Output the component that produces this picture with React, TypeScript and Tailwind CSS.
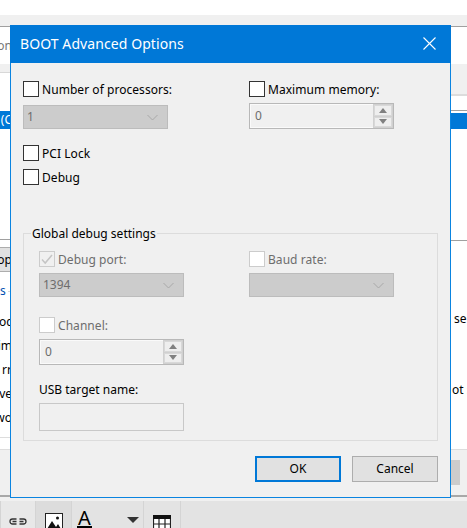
import React from 'react';

const uiFont = "font-['Noto_Sans','Open_Sans',sans-serif]";

function Checkbox({ disabled, checked }: { disabled?: boolean; checked?: boolean }) {
  return (
    <span
      className={`flex h-4 w-4 shrink-0 items-center justify-center border ${
        disabled ? (checked ? 'border-[#cccccc] bg-[#f0f0f0]' : 'border-[#cccccc] bg-white') : 'border-[#333333] bg-white'
      }`}
    >
      {checked && (
        <svg width="12" height="12" viewBox="0 0 12 12" fill="none" stroke="#c4c4c4" strokeWidth="1.5">
          <path d="M1 6.5 L4.2 10 L11 2" />
        </svg>
      )}
    </span>
  );
}

function CheckRow({ label, disabled, checked }: { label: string; disabled?: boolean; checked?: boolean }) {
  return (
    <div className="flex h-4 items-center gap-[3px]">
      <Checkbox disabled={disabled} checked={checked} />
      <span className={`pt-[2px] text-[12px] leading-[16px] tracking-[0.05px] ${disabled ? 'text-[#6d6d6d]' : 'text-black'}`}>{label}</span>
    </div>
  );
}

function Combo({ value }: { value: string }) {
  return (
    <div className="flex h-6 w-[145px] items-center justify-between border border-[#bcbcbc] bg-[#cccccc] pl-[3px] pr-[9px]">
      <span className="text-[12px] text-[#6d6d6d]">{value}</span>
      <svg width="11" height="7" viewBox="0 0 11 7" fill="none" stroke="#a8a8a8">
        <path d="M0.5 1 L5.5 6 L10.5 1" />
      </svg>
    </div>
  );
}

function Spinner({ value }: { value: string }) {
  return (
    <div className="flex h-[26px] w-[145px] border border-[#b8b8b8] bg-[#f0f0f0]">
      <div className="flex flex-1 items-center border border-[#fafafa] border-r-0 pl-[4px] text-[12px] text-[#6d6d6d]">{value}</div>
      <div className="flex w-[20px] flex-col gap-px bg-[#d0d0d0] p-px">
        <div className="flex flex-1 items-center justify-center border border-[#d8d8d8] bg-[#eeeeee]">
          <svg width="8" height="5" viewBox="0 0 8 5" fill="#808080"><path d="M0 5 L4 0 L8 5 Z" /></svg>
        </div>
        <div className="flex flex-1 items-center justify-center border border-[#d8d8d8] bg-[#eeeeee]">
          <svg width="8" height="5" viewBox="0 0 8 5" fill="#808080"><path d="M0 0 L8 0 L4 5 Z" /></svg>
        </div>
      </div>
    </div>
  );
}

function Dialog() {
  return (
    <div className={`absolute left-[10px] top-[25px] flex h-[473px] w-[441px] flex-col border border-[#0a84e0] bg-[#f0f0f0] ${uiFont}`}>
      <div className="-mx-px -mt-px flex h-[38px] shrink-0 items-center justify-between bg-[#0078d7] pb-[1px] pl-[10px] pr-[15px]">
        <span className="text-[14px] tracking-[0.08px] text-white">BOOT Advanced Options</span>
        <svg width="13" height="13" viewBox="0 0 13 13" stroke="#ffffff" strokeWidth="1.1">
          <path d="M0.5 0.5 L12.5 12.5 M12.5 0.5 L0.5 12.5" />
        </svg>
      </div>

      <div className="flex flex-1 flex-col pl-[12px] pr-[12px] pt-[18px]">
        <div className="grid grid-cols-[226px_1fr]">
          <div className="flex flex-col">
            <CheckRow label="Number of processors:" />
            <div className="mt-2"><Combo value="1" /></div>
            <div className="mt-4"><CheckRow label="PCI Lock" /></div>
            <div className="mt-2"><CheckRow label="Debug" /></div>
          </div>
          <div className="flex flex-col">
            <CheckRow label="Maximum memory:" />
            <div className="mt-[6px]"><Spinner value="0" /></div>
          </div>
        </div>

        <div className="relative mt-[48px] h-[208px] border border-[#dcdcdc] pl-[15px] pt-[17px]">
          <span className="absolute -top-[8px] left-[7px] bg-[#f0f0f0] px-px text-[12px] leading-[16px] text-black">
            Global debug settings
          </span>
          <div className="grid grid-cols-[210px_1fr]">
            <div className="flex flex-col">
              <CheckRow label="Debug port:" disabled checked />
              <div className="mt-[6px]"><Combo value="1394" /></div>
              <div className="mt-5"><CheckRow label="Channel:" disabled /></div>
              <div className="mt-[6px]"><Spinner value="0" /></div>
              <span className="mt-[17px] text-[12px] leading-[16px] text-black">USB target name:</span>
              <div className="mt-[5px] h-[28px] w-[145px] border border-[#c8c8c8] bg-[#f0f0f0]" />
            </div>
            <div className="flex flex-col">
              <CheckRow label="Baud rate:" disabled />
              <div className="mt-[6px]"><Combo value="" /></div>
            </div>
          </div>
        </div>

        <div className="mt-[15px] flex justify-end gap-[11px]">
          <button className="h-[26px] w-[86px] border-2 border-[#0078d7] bg-[#e1e1e1] text-[12px] text-black">OK</button>
          <button className="h-[26px] w-[86px] border border-[#adadad] bg-[#e1e1e1] text-[12px] text-black">Cancel</button>
        </div>
      </div>
    </div>
  );
}

function ClipText({ text, className }: { text: string; className?: string }) {
  return (
    <div className={`flex h-6 items-center justify-end overflow-hidden whitespace-nowrap text-[12px] text-black ${className ?? ''}`}>
      {text}
    </div>
  );
}

function LeftStrip() {
  return (
    <div className="flex w-[12px] flex-col overflow-hidden">
      <div className="flex h-[37px] items-center justify-end overflow-hidden bg-white text-[12px] text-[#777777]">on</div>
      <div className="h-[9px] border-b border-[#d8d8d8] bg-[#f0f0f0]" />
      <div className="h-[38px] bg-white" />
      <div className="flex h-[18px] items-center justify-end overflow-hidden bg-[#0078d7] text-[12px] text-white">(C</div>
      <div className="h-[111px] border-b border-[#a0a0a0] bg-white" />
      <div className="h-[7px] bg-white" />
      <div className="flex h-[25px] items-center justify-end overflow-hidden border-y border-[#adadad] bg-[#e1e1e1] text-[12px] text-black">op</div>
      <div className="flex flex-1 flex-col bg-white">
        <div className="mt-[9px] flex h-[20px] items-center justify-between text-[12px] text-[#0050b0]">
          <span>s</span>
          <span className="h-px w-[4px] bg-[#d8d8d8]" />
        </div>
        <div className="mt-[9px]">
          <ClipText text="oc" />
          <ClipText text="im" />
          <ClipText text="rr" />
          <ClipText text="ve" />
          <ClipText text="wo" />
        </div>
      </div>
      <div className="h-[12px] border-t border-[#dddddd] bg-white" />
      <div className="h-[46px] border-t border-[#dddddd] bg-[#f0f0f0]" />
    </div>
  );
}

function RightStrip() {
  return (
    <div className="flex w-[16px] flex-col overflow-hidden">
      <div className="h-[37px] bg-white" />
      <div className="h-[32px] border-b-2 border-[#dcdcdc] bg-[#f0f0f0]" />
      <div className="h-[15px] border-b border-[#a0a0a0] bg-white" />
      <div className="h-[2px] bg-white" />
      <div className="h-4 bg-[#0078d7]" />
      <div className="h-[112px] border-b border-[#a0a0a0] bg-white" />
      <div className="flex flex-1 flex-col bg-white">
        <div className="mt-[66px] h-6 overflow-hidden whitespace-nowrap pl-[3px] text-[12px] leading-6 text-black">se</div>
        <div className="mt-[47px] h-6 overflow-hidden whitespace-nowrap pl-px text-[12px] leading-6 text-black">ot s</div>
      </div>
      <div className="flex h-[46px] items-center border-t border-[#dddddd] bg-[#f0f0f0]">
        <div className="h-[25px] w-[9px] bg-[#cccccc]" />
      </div>
    </div>
  );
}

function Toolbar() {
  return (
    <div className="flex h-[33px] border-t-2 border-[#a8a8a8] bg-[#f0f0f0] pt-[4px]">
      <div className="flex flex-1 items-start bg-[#e3e3e3]">
        <div className="flex h-full w-[36px] items-start justify-center border-x border-[#d4d4d4] bg-[#e8e8e8] pt-[17px]">
          <svg width="18" height="7" viewBox="0 0 18 7" fill="none" stroke="#333333" strokeWidth="1.3">
            <path d="M7.5 1 H3.5 a2.5 2.5 0 0 0 0 5 H7.5 M3.5 3.5 H7.5 M10.5 1 H14.5 a2.5 2.5 0 0 1 0 5 H10.5 M10.5 3.5 H14.5" />
          </svg>
        </div>
        <div className="flex h-full w-[36px] items-start justify-center border-r border-[#d4d4d4] bg-[#dcdcdc] pt-[12px]">
          <svg width="18" height="18" viewBox="0 0 18 18" fill="none">
            <rect x="0.5" y="0.5" width="17" height="17" fill="#ffffff" stroke="#222222" />
            <circle cx="12.5" cy="5" r="1.5" fill="#111111" />
            <path d="M2 16 L7 8 L11 14 L13 11 L16 16 Z" fill="#111111" />
          </svg>
        </div>
        <div className={`relative flex h-full w-[72px] items-start justify-between border-r border-[#d4d4d4] pl-[5px] pr-[4px] ${uiFont}`}>
          <div className="flex flex-col items-center">
            <span className="mt-[9px] text-[20px] leading-[16px] text-black">A</span>
            <span className="h-[2px] w-[15px] bg-black" />
          </div>
          <svg className="mt-[16px]" width="12" height="6" viewBox="0 0 12 6" fill="#333333"><path d="M0 0 H12 L6 6 Z" /></svg>
        </div>
        <div className="flex h-full w-[37px] items-start justify-center border-r border-[#d4d4d4] pt-[14px]">
          <svg width="18" height="18" viewBox="0 0 18 18" fill="none" stroke="#222222" strokeWidth="1.2">
            <rect x="0.5" y="0.5" width="17" height="17" fill="#ffffff" />
            <rect x="0" y="0" width="18" height="4" fill="#111111" stroke="none" />
            <path d="M6 4 V18 M12 4 V18 M0 9 H18 M0 14 H18" />
          </svg>
        </div>
      </div>
    </div>
  );
}

export default function App() {
  return (
    <div className={`relative flex h-[528px] w-[467px] flex-col overflow-hidden bg-white ${uiFont}`}>
      <div className="h-[15px] shrink-0 bg-white" />
      <div className="h-[12px] shrink-0 border-b border-[#a0a0a0] bg-[#f0f0f0]" />
      <div className="flex flex-1 justify-between">
        <LeftStrip />
        <RightStrip />
      </div>
      <Toolbar />
      <Dialog />
    </div>
  );
}
